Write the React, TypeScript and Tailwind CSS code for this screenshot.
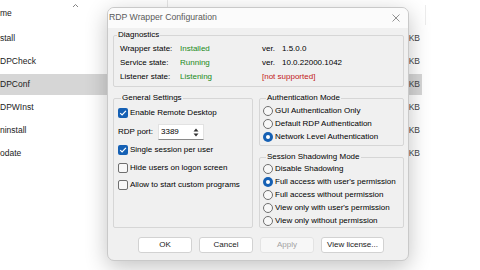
import React from "react"

const ui = "font-['Liberation_Sans',Arial,sans-serif]"

// only the part of each name that shows left of the dialog
const files = [
  { name: "stall", sel: false },
  { name: "DPCheck", sel: false },
  { name: "DPConf", sel: true },
  { name: "DPWInst", sel: false },
  { name: "ninstall", sel: false },
  { name: "odate", sel: false },
]

function Check({ on }: { on?: boolean }) {
  if (on)
    return (
      <span className="flex h-[10px] w-[10px] shrink-0 items-center justify-center rounded-[2px] bg-[#1560b4]">
        <svg width="8" height="8" viewBox="0 0 8 8">
          <path d="M1.2 4.1 3.1 6 6.9 1.9" fill="none" stroke="#fff" strokeWidth="1.2" />
        </svg>
      </span>
    )
  return <span className="h-[10px] w-[10px] shrink-0 rounded-[2px] border border-[#6f6f6f] bg-[#f8f8f8]" />
}

function Radio({ on }: { on?: boolean }) {
  if (on)
    return (
      <span className="flex h-[10px] w-[10px] shrink-0 items-center justify-center rounded-full bg-[#1560b4]">
        <span className="h-[4px] w-[4px] rounded-full bg-white" />
      </span>
    )
  return <span className="h-[10px] w-[10px] shrink-0 rounded-full border border-[#6f6f6f] bg-[#f8f8f8]" />
}

function CheckRow({ on, label, className = "" }: { on?: boolean; label: string; className?: string }) {
  return (
    <div className={`flex h-[14px] items-center gap-[2px] ${className}`}>
      <Check on={on} />
      <span>{label}</span>
    </div>
  )
}

function RadioRow({ on, label }: { on?: boolean; label: string }) {
  return (
    <div className="flex h-[13px] items-center gap-[2px]">
      <Radio on={on} />
      <span className="whitespace-nowrap">{label}</span>
    </div>
  )
}

function Group({ title, children, className = "" }: { title: string; children: React.ReactNode; className?: string }) {
  return (
    <fieldset className={`m-0 min-w-0 rounded-[2px] border border-[#d6d6d6] ${className}`}>
      <legend className="ml-[3px] px-[1px] leading-[10px]">{title}</legend>
      {children}
    </fieldset>
  )
}

function Btn({ label, w, disabled }: { label: string; w: string; disabled?: boolean }) {
  return (
    <div
      className={`flex h-[16px] items-center justify-center rounded-[3px] border ${w} ${
        disabled ? "border-[#e3e3e3] bg-[#f7f7f7] text-[#a3a3a3]" : "border-[#d2d2d2] bg-white text-[#1a1a1a]"
      }`}
    >
      {label}
    </div>
  )
}

export default function App() {
  return (
    <div className={`relative h-[270px] w-[480px] overflow-hidden bg-white ${ui}`}>
      {/* explorer list behind the dialog */}
      <div className="text-[8.5px] text-[#1b1b1b]">
        <div className="relative flex h-[27px] items-center">
          <span>me</span>
          <svg className="absolute left-[72px] top-[3px]" width="7" height="5" viewBox="0 0 7 5">
            <path d="M1 4 3.5 1.5 6 4" fill="none" stroke="#777" strokeWidth="0.9" />
          </svg>
          <span className="absolute left-[167px] top-0 h-[7px] w-px bg-[#e6e6e6]" />
          <span className="absolute left-[425px] top-[5px] h-[20px] w-px bg-[#ececec]" />
        </div>
        {files.map((f) => (
          <div key={f.name} className="flex h-[23px] w-[422px] items-center py-[1px]">
            <div
              className={`flex h-full w-full items-center justify-between pr-[2px] ${f.sel ? "bg-[#d6d6d6]" : ""}`}
            >
              <span>{f.name}</span>
              <span className="text-[#444]">KB</span>
            </div>
          </div>
        ))}
      </div>

      {/* dialog window */}
      <div className="absolute left-[107px] top-[7px] flex h-[254px] w-[302px] flex-col overflow-hidden rounded-[7px] border border-[#c9c9c9] bg-[#f0f0f0] text-[8px] text-black shadow-[0_6px_22px_rgba(0,0,0,0.24)]">
        <div className="flex h-[20px] shrink-0 items-center justify-between bg-[#fbfbfb] pl-[1px] pr-[8px]">
          <span className="text-[8.7px] text-[#5a5a5a]">RDP Wrapper Configuration</span>
          <svg width="8" height="8" viewBox="0 0 8 8">
            <path d="M0.5 0.5 7.5 7.5M7.5 0.5 0.5 7.5" stroke="#777" strokeWidth="0.8" />
          </svg>
        </div>

        <div className="flex flex-1 flex-col pl-[5px] pr-[4px] pt-[2px]">
          <Group title="Diagnostics" className="pb-[2px]">
            <div className="grid grid-cols-[60px_82px_20px_1fr] pl-[6px] pt-[2px] leading-[14px]">
              <span>Wrapper state:</span>
              <span className="text-[#1a8a1a]">Installed</span>
              <span>ver.</span>
              <span>1.5.0.0</span>
              <span>Service state:</span>
              <span className="text-[#1a8a1a]">Running</span>
              <span>ver.</span>
              <span>10.0.22000.1042</span>
              <span>Listener state:</span>
              <span className="text-[#1a8a1a]">Listening</span>
              <span className="col-span-2 text-[#c21818]">[not supported]</span>
            </div>
          </Group>

          <div className="mt-[6px] grid grid-cols-[140px_1fr] gap-[6px]">
            <Group title="General Settings" className="pl-[4px]">
              <CheckRow on label="Enable Remote Desktop" className="mt-[3px]" />
              <div className="mt-[4px] flex h-[16px] items-center">
                <span className="w-[40px]">RDP port:</span>
                <div className="flex h-[16px] w-[46px] items-center justify-between border border-[#e2e2e2] border-b-[#8a8a8a] bg-white pl-[2px] pr-[4px]">
                  <span>3389</span>
                  <svg width="6" height="9" viewBox="0 0 6 9">
                    <path d="M3 0.5 5.5 3.5H0.5Z" fill="#333" />
                    <path d="M3 8.5 5.5 5.5H0.5Z" fill="#333" />
                  </svg>
                </div>
              </div>
              <CheckRow on label="Single session per user" className="mt-[3px]" />
              <CheckRow label="Hide users on logon screen" className="mt-[4px]" />
              <CheckRow label="Allow to start custom programs" className="mt-[3px]" />
            </Group>

            <div className="flex flex-col gap-[6px]">
              <Group title="Authentication Mode" className="pb-[2px] pl-[3px] pt-[1px]">
                <RadioRow label="GUI Authentication Only" />
                <RadioRow label="Default RDP Authentication" />
                <RadioRow on label="Network Level Authentication" />
              </Group>
              <Group title="Session Shadowing Mode" className="flex-1 pl-[3px]">
                <RadioRow label="Disable Shadowing" />
                <RadioRow on label="Full access with user's permission" />
                <RadioRow label="Full access without permission" />
                <RadioRow label="View only with user's permission" />
                <RadioRow label="View only without permission" />
              </Group>
            </div>
          </div>

          <div className="mt-[9px] flex gap-[7px] pl-[25px]">
            <Btn label="OK" w="w-[54px]" />
            <Btn label="Cancel" w="w-[54px]" />
            <Btn label="Apply" w="w-[54px]" disabled />
            <Btn label="View license..." w="w-[63px]" />
          </div>
        </div>
      </div>
    </div>
  )
}
